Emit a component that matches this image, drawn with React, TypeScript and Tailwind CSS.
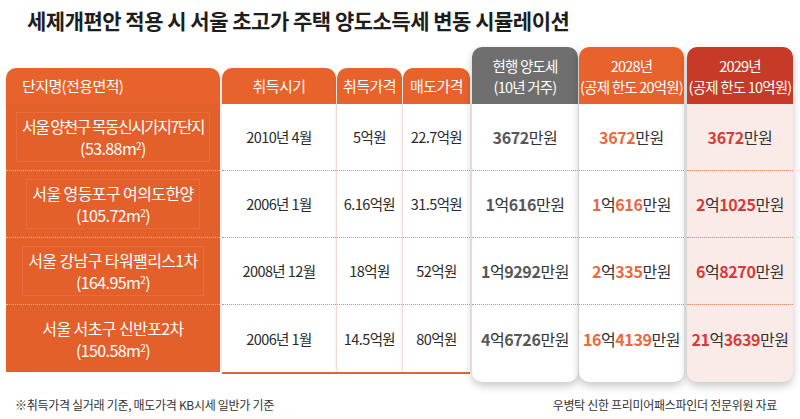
import React from "react";

type Row = {
  name: string;
  area: string;
  date: string;
  buy: string;
  sell: string;
  cur: string;
  y28: string;
  y29: string;
  tight?: boolean;
};

const rows: Row[] = [
  { name: "서울 양천구 목동신시가지7단지", area: "53.88", date: "2010년 4월", buy: "5억원", sell: "22.7억원", cur: "3672만원", y28: "3672만원", y29: "3672만원", tight: true },
  { name: "서울 영등포구 여의도한양", area: "105.72", date: "2006년 1월", buy: "6.16억원", sell: "31.5억원", cur: "1억616만원", y28: "1억616만원", y29: "2억1025만원" },
  { name: "서울 강남구 타워팰리스1차", area: "164.95", date: "2008년 12월", buy: "18억원", sell: "52억원", cur: "1억9292만원", y28: "2억335만원", y29: "6억8270만원" },
  { name: "서울 서초구 신반포2차", area: "150.58", date: "2006년 1월", buy: "14.5억원", sell: "80억원", cur: "4억6726만원", y28: "16억4139만원", y29: "21억3639만원" },
];

function Amount({ text, color }: { text: string; color: string }) {
  return (
    <span className="whitespace-nowrap text-[16px] tracking-[-0.4px] text-[#333]">
      {text.split(/(\d+)/).map((part, i) =>
        /\d/.test(part) ? (
          <span key={i} className={`font-bold ${color}`}>{part}</span>
        ) : (
          <span key={i}>{part}</span>
        )
      )}
    </span>
  );
}

function PlainColumn({ title, width, field }: { title: string; width: string; field: "date" | "buy" | "sell" }) {
  return (
    <div className={`flex flex-col ${width}`}>
      <div className="flex h-[36px] items-center justify-center rounded-t-[10px] bg-[#e8622c] text-[15px] tracking-[-0.5px] text-white shadow-[0_2px_3px_rgba(0,0,0,0.15)]">
        {title}
      </div>
      <div className="flex flex-col bg-white shadow-[0_0_4px_rgba(210,120,90,0.35)]">
        {rows.map((r, i) => (
          <div
            key={i}
            className={`flex h-[67px] items-center justify-center text-[14.5px] tracking-[-0.6px] text-[#2a2a2a] ${
              i < 3 ? "border-b border-dotted border-[#ec8a66]" : ""
            }`}
          >
            {r[field]}
          </div>
        ))}
      </div>
    </div>
  );
}

function TallColumn({
  title,
  sub,
  head,
  body,
  num,
  field,
  width,
}: {
  title: string;
  sub: string;
  head: string;
  body: string;
  num: string;
  field: "cur" | "y28" | "y29";
  width: string;
}) {
  return (
    <div className={`flex flex-col rounded-[10px] shadow-[0_4px_8px_rgba(0,0,0,0.22)] ${width} ${body}`}>
      <div className={`flex h-[57px] flex-col items-center justify-center whitespace-nowrap rounded-t-[10px] text-[14.5px] leading-[21px] tracking-[-0.8px] text-white ${head}`}>
        <span>{title}</span>
        <span>{sub}</span>
      </div>
      {rows.map((r, i) => (
        <div
          key={i}
          className={`flex h-[67px] items-center justify-center ${
            i < 3 ? "border-b border-dotted border-[#ec8a66]" : ""
          }`}
        >
          <Amount text={r[field]} color={num} />
        </div>
      ))}
      <div className="h-[10px]" />
    </div>
  );
}

export default function App() {
  return (
    <div className="relative h-[419px] w-[800px] overflow-hidden bg-white font-['Noto_Sans_CJK_KR','Noto_Sans',sans-serif]">
      <h1 className="pl-[27px] pt-[6px] text-[21px] font-bold leading-[28px] tracking-[-0.5px] text-[#1e1e1e]">
        세제개편안 적용 시 서울 초고가 주택 양도소득세 변동 시뮬레이션
      </h1>

      <div className="mt-[13px] flex items-start pl-[6px]">
        {/* 단지명 */}
        <div className="mt-[21px] flex w-[214px] flex-col">
          <div className="flex h-[36px] items-center rounded-t-[10px] bg-[#e8622c] pl-[16px] text-[15px] tracking-[-0.6px] text-white shadow-[0_2px_3px_rgba(0,0,0,0.15)]">
            단지명(전용면적)
          </div>
          <div className="flex flex-col bg-[#e4602b]">
            {rows.map((r, i) => (
              <div
                key={i}
                className={`flex h-[67px] items-center justify-center ${
                  i < 3 ? "border-b border-dotted border-[#f6c2ab]" : ""
                }`}
              >
                <div
                  className={`flex flex-col items-center px-[5px] py-[2px] text-[16px] leading-[22px] text-white ${
                    i < 3 ? "border border-[#e76b3c]" : ""
                  }`}
                >
                  <span className={r.tight ? "tracking-[-1.6px]" : "tracking-[-0.6px]"}>{r.name}</span>
                  <span className="tracking-[-0.6px]">
                    ({r.area}m<sup className="text-[10px]">2</sup>)
                  </span>
                </div>
              </div>
            ))}
          </div>
        </div>

        {/* 취득/매도 */}
        <div className="ml-[2px] mt-[21px] flex flex-col">
          <div className="flex gap-px">
            <PlainColumn title="취득시기" width="w-[114px]" field="date" />
            <PlainColumn title="취득가격" width="w-[65px]" field="buy" />
            <PlainColumn title="매도가격" width="w-[67px]" field="sell" />
          </div>
          <div className="h-[2px] bg-[#e2653a]" />
        </div>

        <div className="ml-[2px] flex gap-[1px]">
          <TallColumn
            title="현행 양도세"
            sub="(10년 거주)"
            head="bg-[#6f6f6f]"
            body="bg-white"
            num="text-[#585858]"
            field="cur"
            width="w-[106px]"
          />
          <TallColumn
            title="2028년"
            sub="(공제 한도 20억원)"
            head="bg-[#e8622c]"
            body="bg-white"
            num="text-[#ec6841]"
            field="y28"
            width="w-[105px]"
          />
          <div className="w-px" />
          <TallColumn
            title="2029년"
            sub="(공제 한도 10억원)"
            head="bg-[#c63a27]"
            body="bg-[#fbebe8]"
            num="text-[#d83a3a]"
            field="y29"
            width="w-[106px]"
          />
        </div>
      </div>

      <div className="mt-[14px] flex items-center justify-between pl-[15px] pr-[23px] text-[12px] tracking-[-0.3px] text-[#333]">
        <span>※취득가격 실거래 기준, 매도가격 KB시세 일반가 기준</span>
        <span>우병탁 신한 프리미어패스파인더 전문위원 자료</span>
      </div>
    </div>
  );
}
